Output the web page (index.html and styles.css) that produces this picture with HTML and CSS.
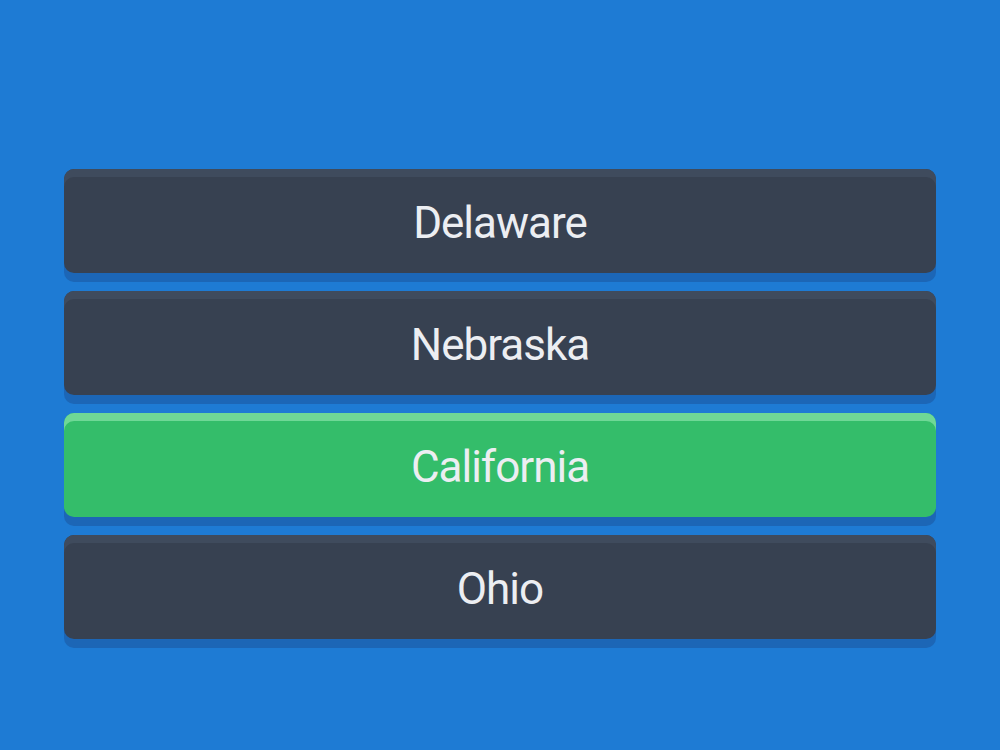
FILE: index.html
```html
<!DOCTYPE html>
<html lang="en">
<head>
    <meta charset="UTF-8">
    <title>Quiz</title>
    <link rel="stylesheet" href="styles.css">
</head>
<body>
    <div class="answers">
        <button class="answer">Delaware</button>
        <button class="answer">Nebraska</button>
        <button class="answer correct">California</button>
        <button class="answer">Ohio</button>
    </div>
</body>
</html>
```

FILE: styles.css
```css
body {
    margin: 0;
    padding: 0;
    background: #1e7bd4;
    font-family: Roboto, "Noto Sans", sans-serif;
    height: 750px;
    overflow: hidden;
}
.answers {
    display: flex;
    flex-direction: column;
    gap: 18px;
    width: 872px;
    margin: 169px auto 0;
}
.answer {
    height: 104px;
    padding: 4px 0 0;
    border: none;
    border-radius: 10px;
    background: #374151;
    color: #eceef2;
    font-family: inherit;
    font-size: 44px;
    letter-spacing: -1px;
    box-shadow: inset 0 8px 0 #3f4b5d, 0 9px 0 #1c66b6;
    cursor: pointer;
}
.answer.correct {
    background: #34bd6a;
    box-shadow: inset 0 8px 0 #6fd896, 0 9px 0 #1c66b6;
}
```
